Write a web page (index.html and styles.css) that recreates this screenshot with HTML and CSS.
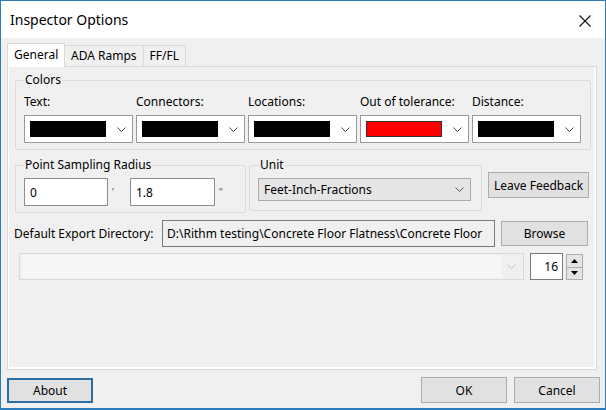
FILE: index.html
```html
<!DOCTYPE html>
<html lang="en">
<head>
    <meta charset="UTF-8">
    <title>Inspector Options</title>
    <link rel="stylesheet" href="styles.css">
</head>
<body>
    <div class="window">
        <div class="titlebar">
            <span class="title">Inspector Options</span>
            <svg class="close" width="12" height="12" viewBox="0 0 12 12">
                <path d="M0.5 0.5 L11.5 11.5 M11.5 0.5 L0.5 11.5" stroke="#111" stroke-width="1.1" fill="none"/>
            </svg>
        </div>

        <div class="client">
            <div class="tabs">
                <div class="tab active">General</div>
                <div class="tab">ADA Ramps</div>
                <div class="tab">FF/FL</div>
            </div>

            <div class="tabpanel">
                <fieldset class="group colors">
                    <legend>Colors</legend>
                    <div class="color-grid">
                        <div class="color-field">
                            <label>Text:</label>
                            <div class="combo color-combo"><span class="swatch"></span><svg class="chev" width="9" height="5" viewBox="0 0 9 5"><polyline points="0.5,0.5 4.5,4.5 8.5,0.5" fill="none" stroke="#444"/></svg></div>
                        </div>
                        <div class="color-field">
                            <label>Connectors:</label>
                            <div class="combo color-combo"><span class="swatch"></span><svg class="chev" width="9" height="5" viewBox="0 0 9 5"><polyline points="0.5,0.5 4.5,4.5 8.5,0.5" fill="none" stroke="#444"/></svg></div>
                        </div>
                        <div class="color-field">
                            <label>Locations:</label>
                            <div class="combo color-combo"><span class="swatch"></span><svg class="chev" width="9" height="5" viewBox="0 0 9 5"><polyline points="0.5,0.5 4.5,4.5 8.5,0.5" fill="none" stroke="#444"/></svg></div>
                        </div>
                        <div class="color-field">
                            <label>Out of tolerance:</label>
                            <div class="combo color-combo"><span class="swatch red"></span><svg class="chev" width="9" height="5" viewBox="0 0 9 5"><polyline points="0.5,0.5 4.5,4.5 8.5,0.5" fill="none" stroke="#444"/></svg></div>
                        </div>
                        <div class="color-field">
                            <label>Distance:</label>
                            <div class="combo color-combo"><span class="swatch"></span><svg class="chev" width="9" height="5" viewBox="0 0 9 5"><polyline points="0.5,0.5 4.5,4.5 8.5,0.5" fill="none" stroke="#444"/></svg></div>
                        </div>
                    </div>
                </fieldset>

                <div class="row row-mid">
                    <fieldset class="group radius">
                        <legend>Point Sampling Radius</legend>
                        <div class="radius-inputs">
                            <div class="textbox feet">0</div>
                            <span class="unit-mark">'</span>
                            <div class="textbox inches">1.8</div>
                            <span class="unit-mark">"</span>
                        </div>
                    </fieldset>
                    <fieldset class="group unit">
                        <legend>Unit</legend>
                        <div class="combo unit-combo">
                            <span>Feet-Inch-Fractions</span>
                            <svg class="chev" width="9" height="5" viewBox="0 0 9 5"><polyline points="0.5,0.5 4.5,4.5 8.5,0.5" fill="none" stroke="#555"/></svg>
                        </div>
                    </fieldset>
                    <button class="btn feedback">Leave Feedback</button>
                </div>

                <div class="row row-export">
                    <span class="export-label">Default Export Directory:</span>
                    <div class="textbox path">D:\Rithm testing\Concrete Floor Flatness\Concrete Floor</div>
                    <button class="btn browse">Browse</button>
                </div>

                <div class="row row-font">
                    <div class="combo disabled-combo">
                        <span class="field"></span>
                        <svg class="chev" width="9" height="5" viewBox="0 0 9 5"><polyline points="0.5,0.5 4.5,4.5 8.5,0.5" fill="none" stroke="#c4c4c4"/></svg>
                    </div>
                    <div class="numeric">
                        <div class="textbox num">16</div>
                        <div class="spinner">
                            <div class="spin up"><svg width="7" height="4" viewBox="0 0 7 4"><polygon points="0,4 3.5,0 7,4" fill="#000"/></svg></div>
                            <div class="spin down"><svg width="7" height="4" viewBox="0 0 7 4"><polygon points="0,0 3.5,4 7,0" fill="#000"/></svg></div>
                        </div>
                    </div>
                </div>
            </div>

            <div class="footer">
                <button class="btn about">About</button>
                <div class="spacer"></div>
                <button class="btn ok">OK</button>
                <button class="btn cancel">Cancel</button>
            </div>
        </div>
    </div>
</body>
</html>
```

FILE: styles.css
```css
body {
    margin: 0;
    padding: 0;
    background-color: #f0f0f0;
    font-family: "Noto Sans", "Open Sans", Arial, sans-serif;
    font-size: 12px;
    color: #000;
}
.window {
    width: 606px;
    height: 410px;
    box-sizing: border-box;
    border: 1px solid #2b7bbd;
    border-bottom-width: 2px;
    display: flex;
    flex-direction: column;
    background-color: #f0f0f0;
}
.titlebar {
    height: 37px;
    flex: none;
    background-color: #fff;
    display: flex;
    align-items: center;
    justify-content: space-between;
    padding: 0 14px 0 9px;
}
.title {
    font-size: 14px;
    margin-top: -1px;
}
.close {
    margin-top: 2px;
}
.client {
    flex: 1;
    display: flex;
    flex-direction: column;
    padding: 5px 8px 0 6px;
}
/* Tabs */
.tabs {
    display: flex;
    align-items: flex-end;
    height: 23px;
    position: relative;
    z-index: 1;
}
.tab {
    box-sizing: border-box;
    height: 21px;
    padding: 0 6px;
    border: 1px solid #d9d9d9;
    border-bottom: none;
    border-left: none;
    background-color: #f0f0f0;
    line-height: 20px;
}
.tab.active {
    height: 24px;
    margin-bottom: -1px;
    background-color: #fff;
    border-left: 1px solid #d9d9d9;
    padding: 0 6px 0 6px;
    width: 58px;
    line-height: 21px;
}
.tabpanel {
    height: 304px;
    box-sizing: border-box;
    border: 1px solid #d9d9d9;
    box-shadow: inset 1px 0 0 #fff, inset -2px -2px 0 #fff;
    padding: 5px 5px 0 7px;
    display: flex;
    flex-direction: column;
}
/* Group boxes */
.group {
    margin: 0;
    border: 1px solid #dcdcdc;
    border-radius: 2px;
    padding: 6px 8px 6px 8px;
    min-width: 0;
}
.group legend {
    padding: 0 1px;
    line-height: 16px;
}
.color-grid {
    display: grid;
    grid-template-columns: repeat(5, 109px);
    column-gap: 3px;
}
.color-field label {
    display: block;
    line-height: 16px;
    margin-bottom: 5px;
}
.combo {
    box-sizing: border-box;
    display: flex;
    align-items: center;
    justify-content: space-between;
}
.color-combo {
    height: 28px;
    background-color: #fff;
    border: 1px solid #999;
    padding: 0 6px 0 5px;
}
.swatch {
    width: 76px;
    height: 16px;
    background-color: #000;
}
.swatch.red {
    box-sizing: border-box;
    background-color: #ff0000;
    border: 1px solid #333;
}
.chev {
    display: block;
}
/* Middle row */
.row {
    display: flex;
    align-items: flex-start;
}
.row-mid {
    margin-top: 7px;
}
.radius {
    width: 231px;
    box-sizing: border-box;
    padding-top: 5px;
}
.radius-inputs {
    display: flex;
    align-items: center;
}
.textbox {
    box-sizing: border-box;
    background-color: #fff;
    border: 1px solid #8e8e8e;
    padding: 0 5px;
    display: flex;
    align-items: center;
    white-space: nowrap;
    overflow: hidden;
}
.feet,
.inches {
    height: 28px;
}
.feet {
    width: 84px;
}
.inches {
    width: 85px;
}
.unit-mark {
    width: 22px;
    padding-left: 4px;
    box-sizing: border-box;
    font-family: "Liberation Sans", Arial, sans-serif;
    font-size: 10px;
    color: #555;
}
.unit {
    width: 233px;
    box-sizing: border-box;
    margin-left: 3px;
    padding: 5px 8px 9px 8px;
}
.unit legend {
    margin-left: 1px;
}
.unit-combo {
    width: 213px;
    height: 23px;
    background-color: #e5e5e5;
    border: 1px solid #acacac;
    padding: 0 6px 0 5px;
}
.btn {
    box-sizing: border-box;
    font-family: inherit;
    font-size: 12px;
    color: #000;
    background-color: #e1e1e1;
    border: 1px solid #adadad;
    padding: 0;
    margin: 0;
}
.feedback {
    width: 101px;
    height: 26px;
    margin: 15px 0 0 6px;
}
/* Export row */
.row-export {
    margin-top: 7px;
    align-items: center;
}
.export-label {
    width: 148px;
    margin-left: -1px;
}
.path {
    width: 333px;
    height: 27px;
    background-color: #f0f0f0;
    border-color: #7a7a7a;
    padding: 0 4px;
}
.browse {
    width: 87px;
    height: 25px;
    margin-left: 6px;
}
/* Font row */
.row-font {
    margin-top: 6px;
}
.disabled-combo {
    width: 505px;
    height: 27px;
    margin-left: 4px;
    border: 1px solid #d9d9d9;
    background-color: #f0f0f0;
    padding: 1px 7px 1px 1px;
}
.disabled-combo .field {
    width: 480px;
    height: 100%;
    background-color: #f6f6f6;
}
.numeric {
    display: flex;
    margin-left: 6px;
}
.num {
    width: 33px;
    height: 27px;
    justify-content: flex-end;
    padding: 0 4px 0 0;
    border-color: #7a7a7a;
}
.spinner {
    width: 17px;
    height: 26px;
    margin: 1px 0 0 3px;
    display: flex;
    flex-direction: column;
    border: 1px solid #adadad;
    box-sizing: border-box;
}
.spin {
    flex: 1;
    display: flex;
    align-items: center;
    justify-content: center;
    background-color: #e5e5e5;
}
.spin.up {
    border-bottom: 1px solid #adadad;
}
/* Footer */
.footer {
    display: flex;
    padding-top: 7px;
    margin-right: -3px;
    align-items: flex-start;
}
.footer .btn {
    height: 26px;
    width: 86px;
}
.about {
    border: 2px solid #2b6ea3;
    margin-left: 0;
    margin-top: 1px;
    height: 25px !important;
}
.spacer {
    flex: 1;
}
.cancel {
    margin-left: 7px;
}
```
